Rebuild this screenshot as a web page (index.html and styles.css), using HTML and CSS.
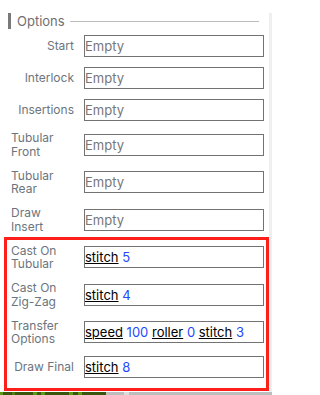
FILE: index.html
```html
<!DOCTYPE html>
<html>
<head>
<meta charset="utf-8">
<link rel="stylesheet" href="styles.css">
</head>
<body>
<div class="panel">
  <div class="legend"><span class="legend-bar"></span><span class="legend-text">Options</span><span class="legend-line"></span></div>
  <div class="rows">
    <div class="label"><span>Start</span></div><div class="field empty">Empty</div>
    <div class="label"><span>Interlock</span></div><div class="field empty">Empty</div>
    <div class="label"><span>Insertions</span></div><div class="field empty">Empty</div>
    <div class="label"><span>Tubular Front</span></div><div class="field empty">Empty</div>
    <div class="label"><span>Tubular Rear</span></div><div class="field empty">Empty</div>
    <div class="label"><span>Draw Insert</span></div><div class="field empty">Empty</div>
    <div class="label"><span>Cast On Tubular</span></div><div class="field"><span class="key">stitch</span> <span class="num">5</span></div>
    <div class="label"><span>Cast On Zig-Zag</span></div><div class="field"><span class="key">stitch</span> <span class="num">4</span></div>
    <div class="label"><span>Transfer Options</span></div><div class="field"><span class="key">speed</span> <span class="num">100</span> <span class="key">roller</span> <span class="num">0</span> <span class="key">stitch</span> <span class="num">3</span></div>
    <div class="label"><span>Draw Final</span></div><div class="field"><span class="key">stitch</span> <span class="num">8</span></div>
  </div>
</div>
<div class="strip"><span class="strip-green"></span><span class="strip-gray"></span><span class="strip-light"></span><span class="strip-gray2"></span></div>
<div class="highlight"></div>
</body>
</html>
```
FILE: styles.css
```css
html, body {
  margin: 0;
  padding: 0;
  background: #ffffff;
  overflow: hidden;
}
body {
  font-family: Inter, "Liberation Sans", sans-serif;
  width: 272px;
  height: 395px;
}
.panel {
  box-sizing: border-box;
  width: 272px;
  margin-top: 13px;
  padding: 0 0 14px 8px;
  border-right: 3px solid #efefef;
}
.legend {
  display: flex;
  align-items: center;
  height: 16px;
  margin-right: 10px;
}
.legend-bar {
  width: 3px;
  height: 16px;
  background: #7a7a7a;
}
.legend-text {
  margin-left: 6px;
  font-size: 13px;
  color: #6f6f6f;
  line-height: 16px;
}
.legend-line {
  flex: 1;
  height: 1px;
  background: #bdbdbd;
  margin-left: 5px;
}
.rows {
  display: grid;
  grid-template-columns: 66px 180px;
  column-gap: 10px;
  row-gap: 10px;
  margin-top: 6px;
}
.label {
  display: flex;
  justify-content: flex-end;
  align-items: center;
  font-size: 12px;
  line-height: 13.75px;
  color: #6c757d;
}
.label span {
  max-width: 63px;
}
.field {
  box-sizing: border-box;
  height: 22px;
  align-self: center;
  border: 1px solid #737373;
  padding-left: 0;
  font-size: 13px;
  line-height: 20px;
  color: #000;
  white-space: nowrap;
  overflow: hidden;
}
.field.empty {
  color: #777777;
}
.key {
  text-decoration: underline;
  color: #000;
}
.num {
  color: #2449ff;
}
.strip {
  display: flex;
  height: 3px;
}
.strip-green {
  width: 106px;
  background: linear-gradient(90deg, #5a9b12 0 3px, #3a560c 3px 12px, #4f7f10 12px 15px, #3a560c 15px 33px, #5a9b12 33px 37px, #3a560c 37px 41px, #5a9b12 41px 45px, #3a560c 45px 69px, #5a9b12 69px 73px, #3a560c 73px 78px, #5a9b12 78px 82px, #3a560c 82px 106px);
}
.strip-gray {
  width: 18px;
  background: #bdbdbd;
}
.strip-light {
  width: 5px;
  background: #dcdcdc;
}
.strip-gray2 {
  flex: 1;
  background: #bdbdbd;
}
.highlight {
  position: absolute;
  left: 4px;
  top: 237px;
  width: 265px;
  height: 154px;
  box-sizing: border-box;
  border: 3px solid #ff1f1a;
}
```
